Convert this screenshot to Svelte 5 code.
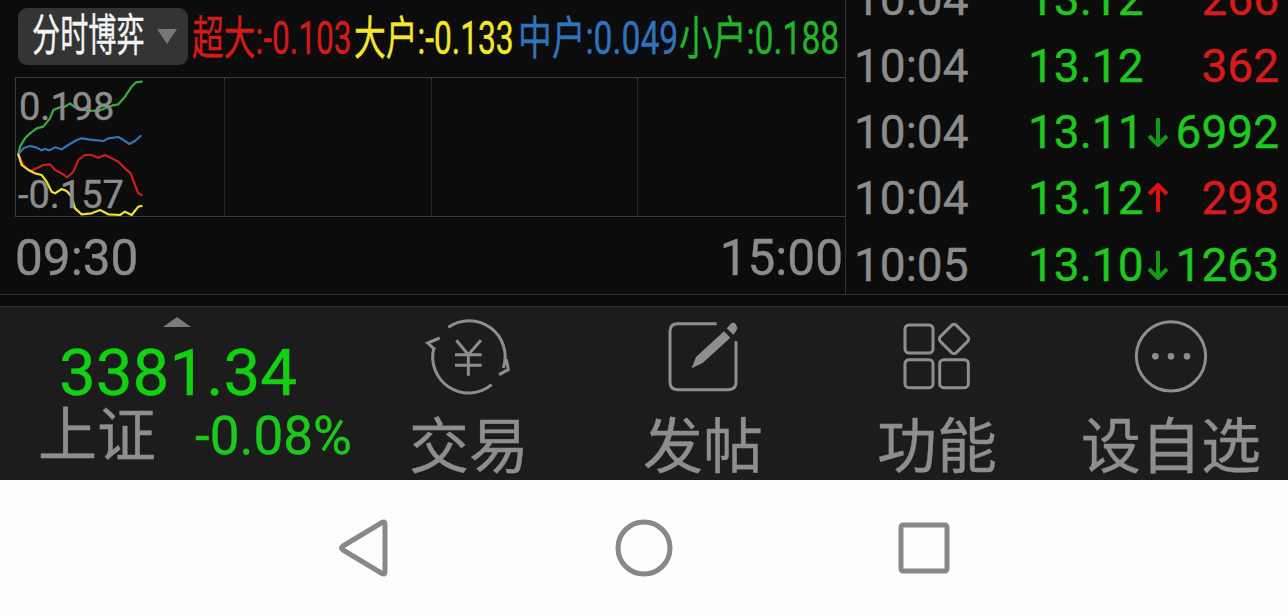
<script>
  const legend = [
    { name: '超大', value: '-0.103', cls: 'red', width: 162 },
    { name: '大户', value: '-0.133', cls: 'yellow', width: 164 },
    { name: '中户', value: '0.049', cls: 'blue wide', width: 161 },
    { name: '小户', value: '0.188', cls: 'green wide', width: 160 }
  ];

  // traced from the small intraday chart
  const lines = [
    { color: '#35b040', pts: '25,238 30,215 45,190 60,175 80,160 100,155 120,130 130,105 150,97 165,95 180,85 195,97 215,105 240,107 265,108 285,100 305,92 325,88 345,65 365,35 378,22 395,20' },
    { color: '#3274b6', pts: '25,238 40,220 60,213 80,218 95,226 105,222 118,226 135,217 155,223 175,210 200,195 215,190 240,194 280,198 295,190 325,186 345,198 358,207 375,198 392,183' },
    { color: '#cc1e1e', pts: '25,238 40,270 60,288 80,280 100,270 120,268 135,285 155,295 172,307 190,290 205,255 225,240 245,240 265,248 285,240 305,250 325,260 345,280 362,295 375,330 385,355 395,360' },
    { color: '#f0e234', pts: '25,238 35,270 55,285 75,295 95,300 110,320 125,350 135,355 155,342 170,348 185,365 195,400 215,418 245,415 270,405 295,418 330,420 345,410 365,420 385,395 395,393' }
  ];

  const ticks = [
    { time: '10:04', price: '13.12', arrow: '', vol: '266', up: true },
    { time: '10:04', price: '13.12', arrow: '', vol: '362', up: true },
    { time: '10:04', price: '13.11', arrow: 'down', vol: '6992', up: false },
    { time: '10:04', price: '13.12', arrow: 'up', vol: '298', up: true },
    { time: '10:05', price: '13.10', arrow: 'down', vol: '1263', up: false }
  ];
</script>

<div class="screen">
  <section class="market">
    <div class="left">
      <div class="head">
        <div class="pill">
          <span class="pill-text">分时博弈</span>
          <i class="caret"></i>
        </div>
        <div class="legend">
          {#each legend as item}
            <div class="legend-item" style="width: {item.width}px">
              <span class="legend-text {item.cls}">{item.name}:{item.value}</span>
            </div>
          {/each}
        </div>
      </div>

      <div class="chart">
        <div class="cell"></div>
        <div class="cell"></div>
        <div class="cell"></div>
        <div class="cell last"></div>
        <svg class="plot" viewBox="0 0 450 435" width="150" height="145">
          {#each lines as line}
            <polyline points={line.pts} fill="none" stroke={line.color} stroke-width="6.5" stroke-linejoin="round" stroke-linecap="round" />
          {/each}
        </svg>
        <span class="scale top">0.198</span>
        <span class="scale bottom">-0.157</span>
      </div>

      <div class="axis">
        <span>09:30</span>
        <span>15:00</span>
      </div>
    </div>

    <div class="ticks">
      {#each ticks as t}
        <div class="tick">
          <span class="time">{t.time}</span>
          <span class="price">{t.price}</span>
          <span class="arrow">
            {#if t.arrow === 'down'}
              <svg viewBox="0 0 22 30" width="22" height="30"><path d="M11 1V28M2 19L11 28L20 19" fill="none" stroke="#129a16" stroke-width="4" /></svg>
            {:else if t.arrow === 'up'}
              <svg viewBox="0 0 22 30" width="22" height="30"><path d="M11 29V2M2 11L11 2L20 11" fill="none" stroke="#e01010" stroke-width="4" /></svg>
            {/if}
          </span>
          <span class="vol" class:rise={t.up}>{t.vol}</span>
        </div>
      {/each}
    </div>
  </section>

  <div class="gap"></div>

  <section class="toolbar">
    <div class="index">
      <i class="up-caret"></i>
      <div class="index-value">3381.34</div>
      <div class="index-row">
        <span class="index-name">上证</span>
        <span class="index-pct">-0.08%</span>
      </div>
    </div>

    <div class="action">
      <svg class="icon" viewBox="75 55 270 240" width="90" height="80">
        <g fill="none" stroke="#8e8e90" stroke-width="9">
          <path d="M148 83A108 108 0 0 1 313 205" />
          <path d="M322 178L328 210L300 225" />
          <path d="M278 255A108 108 0 0 1 105 143" />
          <path d="M122 115L86 130L108 150" />
          <path d="M172 122L208 165L246 122M168 165H248M168 197H248M208 165V228" />
        </g>
      </svg>
      <span class="label">交易</span>
    </div>

    <div class="action">
      <svg class="icon" viewBox="774 55 270 240" width="90" height="80">
        <path d="M950 72H833Q810 72 810 95V247Q810 270 833 270H985Q1008 270 1008 247V125" fill="none" stroke="#8e8e90" stroke-width="9" />
        <path d="M875 206L888 172L972 95L991 114L908 190ZM980 86L994 71Q1001 67 1007 73L1012 84Q1012 90 1000 105Z" fill="#8e8e90" />
      </svg>
      <span class="label">发帖</span>
    </div>

    <div class="action">
      <svg class="icon" viewBox="127 55 270 240" width="90" height="80">
        <g fill="none" stroke="#8e8e90" stroke-width="9">
          <rect x="166" y="76" width="84" height="84" rx="12" />
          <rect x="166" y="180" width="84" height="84" rx="12" />
          <rect x="270" y="180" width="86" height="84" rx="12" />
          <rect x="279" y="84" width="68" height="68" rx="10" transform="rotate(45 313 118)" />
        </g>
      </svg>
      <span class="label">功能</span>
    </div>

    <div class="action">
      <svg class="icon" viewBox="827 55 270 240" width="90" height="80">
        <circle cx="962" cy="170" r="104" fill="none" stroke="#8e8e90" stroke-width="9" />
        <circle cx="915" cy="170" r="10" fill="#8e8e90" />
        <circle cx="962" cy="170" r="10" fill="#8e8e90" />
        <circle cx="1010" cy="170" r="10" fill="#8e8e90" />
      </svg>
      <span class="label">设自选</span>
    </div>
  </section>

  <nav class="navbar">
    <svg viewBox="0 0 52 60" width="52" height="60">
      <path d="M47 5.5V54.5Q47 57 44 55.5L5 32Q2 30 5 28L44 4.5Q47 3 47 5.5Z" fill="none" stroke="#888" stroke-width="5" stroke-linejoin="round" />
    </svg>
    <svg viewBox="0 0 60 60" width="60" height="60">
      <circle cx="30" cy="30" r="26" fill="none" stroke="#888" stroke-width="5" />
    </svg>
    <svg viewBox="0 0 52 52" width="52" height="52">
      <rect x="3" y="3" width="46" height="46" rx="2" fill="none" stroke="#888" stroke-width="5" />
    </svg>
  </nav>
</div>

<style>
  :global(body) {
    margin: 0;
    background: #fdfdfd;
  }

  .screen {
    width: 1288px;
    height: 616px;
    overflow: hidden;
    display: flex;
    flex-direction: column;
    font-family: Roboto, "Noto Sans CJK SC", sans-serif;
    -webkit-text-stroke: 0.4px;
  }

  .market {
    height: 294px;
    flex: none;
    display: flex;
    background: #0c0c0c;
    border-bottom: 1px solid #333;
  }

  .left {
    width: 845px;
    flex: none;
    display: flex;
    flex-direction: column;
  }

  .head {
    height: 77px;
    flex: none;
    display: flex;
    align-items: flex-start;
    padding: 8px 0 0 18px;
    box-sizing: border-box;
  }

  .pill {
    width: 170px;
    height: 57px;
    flex: none;
    display: flex;
    align-items: center;
    padding-left: 14px;
    box-sizing: border-box;
    background: #343434;
    border-radius: 9px;
  }

  .pill-text {
    width: 111px;
    flex: none;
    font-size: 44px;
    line-height: 57px;
    color: #f4f4f4;
    white-space: nowrap;
    transform: scaleX(0.64);
    transform-origin: left center;
  }

  .caret {
    margin-left: 14px;
    border-top: 15px solid #777;
    border-left: 10px solid transparent;
    border-right: 10px solid transparent;
  }

  .legend {
    display: flex;
    margin-left: 4px;
    margin-top: 5px;
  }

  .legend-item {
    flex: none;
    height: 50px;
  }

  .legend-text {
    display: inline-block;
    font-size: 46px;
    line-height: 50px;
    white-space: nowrap;
    transform: scaleX(0.69);
    transform-origin: left center;
  }

  .legend-text.wide {
    transform: scaleX(0.733);
  }

  .red { color: #d41a1a; }
  .yellow { color: #f4e62c; }
  .blue { color: #2f72bd; }
  .green { color: #22b42a; }

  .chart {
    position: relative;
    height: 140px;
    flex: none;
    margin-left: 15px;
    display: grid;
    grid-template-columns: 209px 207px 206px 1fr;
    box-sizing: border-box;
    border: 1px solid #3c3c3c;
    border-right: 0;
  }

  .cell {
    border-right: 1px dotted #3c3c3c;
  }

  .cell.last {
    border-right: 0;
  }

  .scale {
    position: absolute;
    left: 3px;
    font-size: 38px;
    line-height: 40px;
    color: #8c8c8c;
  }

  .scale.top { top: 9px; }
  .scale.bottom { top: 97px; left: 2px; }

  .plot {
    position: absolute;
    left: -6px;
    top: -3px;
  }

  .axis {
    flex: 1;
    display: flex;
    justify-content: space-between;
    align-items: center;
    padding: 4px 2px 0 15px;
    font-size: 49.5px;
    color: #8c8c8c;
  }

  .ticks {
    flex: 1;
    position: relative;
    overflow: hidden;
    border-left: 1px solid #333;
    display: flex;
    flex-direction: column;
    justify-content: flex-end;
    padding: 0 9px 0 8px;
  }

  .tick {
    height: 66.4px;
    flex: none;
    display: flex;
    align-items: center;
    padding-top: 8px;
    box-sizing: border-box;
    font-size: 46px;
    color: #1ec81e;
  }

  .time {
    width: 174px;
    flex: none;
    color: #8c8c8c;
  }

  .price {
    width: 115px;
    flex: none;
  }

  .arrow {
    width: 30px;
    flex: none;
    height: 30px;
    display: flex;
    justify-content: center;
  }

  .vol {
    flex: 1;
    text-align: right;
  }

  .vol.rise {
    color: #d81a1a;
  }

  .gap {
    height: 11px;
    flex: none;
    background: #0a0a0a;
  }

  .toolbar {
    height: 174px;
    flex: none;
    display: grid;
    grid-template-columns: 352px repeat(4, 234px);
    box-sizing: border-box;
    background: #1c1c1c;
    border-top: 1px solid #333;
  }

  .index {
    display: flex;
    flex-direction: column;
    padding: 10px 0 0 38px;
  }

  .up-caret {
    width: 0;
    margin-left: 125px;
    border-bottom: 10px solid #7c7c7c;
    border-left: 14px solid transparent;
    border-right: 14px solid transparent;
  }

  .index-value {
    margin: 13px 0 0 21px;
    font-size: 65.5px;
    line-height: 66px;
    color: #12d012;
  }

  .index-row {
    display: flex;
    align-items: center;
    height: 60px;
  }

  .index-name {
    width: 157px;
    flex: none;
    font-size: 59px;
    line-height: 60px;
    color: #8e8e90;
  }

  .index-pct {
    font-size: 53px;
    color: #1cc81c;
  }

  .action {
    display: flex;
    flex-direction: column;
    align-items: center;
    padding-top: 11px;
  }

  .icon {
    display: block;
    flex: none;
  }

  .label {
    margin-top: 20px;
    font-size: 60px;
    line-height: 60px;
    color: #8e8e90;
    white-space: nowrap;
  }

  .navbar {
    flex: 1;
    display: grid;
    grid-template-columns: repeat(3, 280px);
    justify-content: center;
    justify-items: center;
    align-items: center;
    background: #fdfdfd;
  }
</style>
